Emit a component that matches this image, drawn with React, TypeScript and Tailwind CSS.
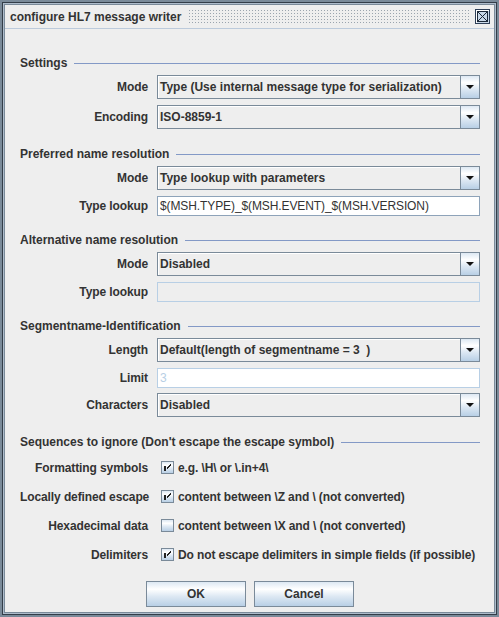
import type { ReactNode } from 'react';

const font = "font-['Liberation_Sans',Arial,sans-serif]";
const ocean =
  'bg-[linear-gradient(to_bottom,#dde8f3_0%,#ffffff_30%,#dde8f3_60%,#b8cfe5_100%)]';

function Header({ title, className = '' }: { title: string; className?: string }) {
  return (
    <div className={`flex h-[14px] items-center ${className}`}>
      <span className="whitespace-nowrap text-[12px] font-bold text-[#333333]">{title}</span>
      <div className="ml-[7px] h-px flex-1 bg-[#8399c6]" />
    </div>
  );
}

function Row({ label, children, className = '' }: { label: string; children: ReactNode; className?: string }) {
  return (
    <div className={`flex items-center ${className}`}>
      <div className="w-[128px] whitespace-nowrap text-right text-[12px] font-bold tracking-[-0.1px] text-[#333333]">
        {label}
      </div>
      <div className="ml-[9px] flex-1">{children}</div>
    </div>
  );
}

function Combo({ value }: { value: string }) {
  return (
    <div className="flex h-[24px] border border-[#7a8a99] bg-[#eeeeee]">
      <div className="flex flex-1 items-center whitespace-pre pl-[2px] text-[12px] font-bold text-[#333333] shadow-[inset_1px_1px_0_#ffffff]">
        {value}
      </div>
      <div className={`flex w-[19px] items-center justify-center border-l border-[#7a8a99] ${ocean}`}>
        <svg width="8" height="4" viewBox="0 0 8 4">
          <polygon points="0,0 8,0 4,4" fill="#111111" />
        </svg>
      </div>
    </div>
  );
}

function Field({ value, disabled, muted }: { value?: string; disabled?: boolean; muted?: boolean }) {
  return (
    <div
      className={`flex h-[20px] items-center whitespace-nowrap border pl-[2px] text-[12px] tracking-[-0.1px] ${
        disabled ? 'border-[#b8cfe5] bg-[#eeeeee]' : muted ? 'border-[#b8cfe5] bg-white' : 'border-[#8ea3b9] bg-white'
      } ${muted ? 'text-[#b8cfe5]' : 'text-[#333333]'}`}
    >
      {value}
    </div>
  );
}

function Check({ checked, text }: { checked: boolean; text: string }) {
  return (
    <div className="flex items-center">
      <div className={`ml-[4px] h-[13px] w-[13px] border border-[#7a8a99] ${ocean}`}>
        {checked && (
          <svg width="11" height="11" viewBox="0 0 11 11" shapeRendering="crispEdges">
            <rect x="2" y="4" width="2" height="5" fill="#222222" />
            <path d="M8.5 2.5 L4.5 6.5 M8.5 3.5 L4.5 7.5" stroke="#222222" strokeWidth="1" fill="none" />
          </svg>
        )}
      </div>
      <span className="ml-[4px] whitespace-nowrap text-[12px] font-bold tracking-[-0.1px] text-[#333333]">{text}</span>
    </div>
  );
}

function Button({ text }: { text: string }) {
  return (
    <div
      className={`flex h-[26px] w-[100px] items-center justify-center border border-[#7a8a99] text-[12px] font-bold text-[#333333] ${ocean}`}
    >
      {text}
    </div>
  );
}

export default function App() {
  return (
    <div className={`h-[617px] w-[499px] bg-[#7a8a99] p-[2px] ${font}`}>
      <div className="h-full border border-[#333d48]">
        <div className="h-full border border-[#aebccb] bg-[#7a8a99] p-px">
          <div className="flex h-full flex-col bg-[#eeeeee]">
            {/* Title bar */}
            <div className="flex h-[23px] items-center">
              <span className="pl-[5px] text-[12px] font-bold text-[#333333]">configure HL7 message writer</span>
              <div className="ml-[7px] h-[15px] flex-1 [background-image:radial-gradient(circle,#9aa4ae_0.7px,transparent_0.8px)] [background-size:3px_3px]" />
              <div className="ml-[6px] mr-[4px] flex h-[15px] w-[15px] items-center justify-center border border-[#2e3f57] bg-[#c9d8e8] shadow-[inset_1px_1px_0_#ffffff]">
                <svg width="11" height="11" viewBox="0 0 11 11" shapeRendering="crispEdges">
                  <path d="M1 1 L10 10 M10 1 L1 10" stroke="#1c2838" strokeWidth="1.4" fill="none" />
                  <rect x="0.5" y="0.5" width="10" height="10" fill="none" stroke="#1c2838" strokeWidth="1" />
                </svg>
              </div>
            </div>
            <div className="h-px bg-[#bccadb]" />

            {/* Content */}
            <div className="flex flex-col pl-[15px] pr-[14px] pt-[27px]">
              <Header title="Settings" />
              <Row label="Mode" className="mt-[5px]">
                <Combo value="Type (Use internal message type for serialization)" />
              </Row>
              <Row label="Encoding" className="mt-[6px]">
                <Combo value="ISO-8859-1" />
              </Row>

              <Header title="Preferred name resolution" className="mt-[18px]" />
              <Row label="Mode" className="mt-[5px]">
                <Combo value="Type lookup with parameters" />
              </Row>
              <Row label="Type lookup" className="mt-[6px]">
                <Field value="$(MSH.TYPE)_$(MSH.EVENT)_$(MSH.VERSION)" />
              </Row>

              <Header title="Alternative name resolution" className="mt-[17px]" />
              <Row label="Mode" className="mt-[5px]">
                <Combo value="Disabled" />
              </Row>
              <Row label="Type lookup" className="mt-[6px]">
                <Field disabled />
              </Row>

              <Header title="Segmentname-Identification" className="mt-[17px]" />
              <Row label="Length" className="mt-[5px]">
                <Combo value="Default(length of segmentname = 3  )" />
              </Row>
              <Row label="Limit" className="mt-[6px]">
                <Field value="3" muted />
              </Row>
              <Row label="Characters" className="mt-[5px]">
                <Combo value="Disabled" />
              </Row>

              <Header title="Sequences to ignore (Don't escape the escape symbol)" className="mt-[18px]" />
              <div className="mt-[4px] flex flex-col">
                <Row label="Formatting symbols" className="h-[29px]">
                  <Check checked text="e.g. \H\ or \.in+4\" />
                </Row>
                <Row label="Locally defined escape" className="h-[29px]">
                  <Check checked text="content between \Z and \ (not converted)" />
                </Row>
                <Row label="Hexadecimal data" className="h-[29px]">
                  <Check checked={false} text="content between \X and \ (not converted)" />
                </Row>
                <Row label="Delimiters" className="h-[29px]">
                  <Check checked text="Do not escape delimiters in simple fields (if possible)" />
                </Row>
              </div>

              <div className="mt-[12px] flex justify-center gap-[8px]">
                <Button text="OK" />
                <Button text="Cancel" />
              </div>
            </div>
          </div>
        </div>
      </div>
    </div>
  );
}
